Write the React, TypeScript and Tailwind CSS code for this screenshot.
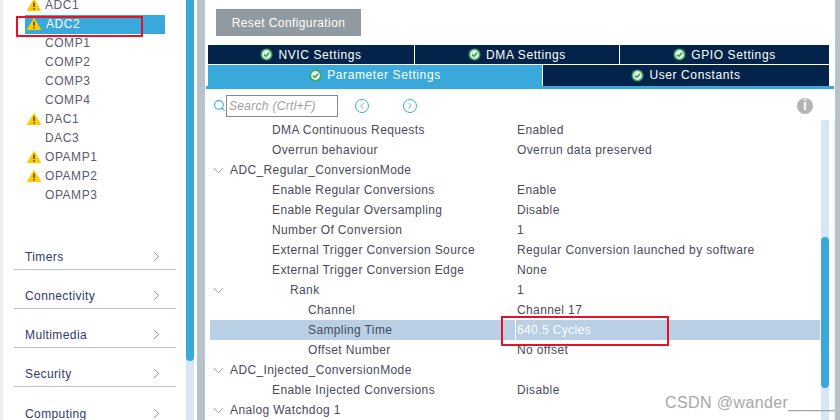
import React from 'react';
import { ChevronRight, ChevronDown, ChevronLeft, Search } from 'lucide-react';

const Warn = () => (
  <svg width="14" height="12" viewBox="0 0 14 12" className="shrink-0">
    <path d="M7 0.5 L13.6 11.5 L0.4 11.5 Z" fill="#ffcc00" stroke="#ffcc00" strokeLinejoin="round" />
    <rect x="6.2" y="3.5" width="1.6" height="4.5" fill="#5b4a00" />
    <rect x="6.2" y="9" width="1.6" height="1.6" fill="#5b4a00" />
  </svg>
);

const Check = () => (
  <svg width="13" height="13" viewBox="0 0 13 13" className="shrink-0">
    <circle cx="6.5" cy="6.5" r="6" fill="#3ba55d" />
    <circle cx="6.5" cy="6.5" r="4.4" fill="#e8f5ec" />
    <path d="M4 6.6 L5.9 8.4 L9 4.9" fill="none" stroke="#3ba55d" strokeWidth="1.6" />
  </svg>
);

const peripherals = [
  { name: 'ADC1', warn: true },
  { name: 'ADC2', warn: true, active: true },
  { name: 'COMP1' },
  { name: 'COMP2' },
  { name: 'COMP3' },
  { name: 'COMP4' },
  { name: 'DAC1', warn: true },
  { name: 'DAC3' },
  { name: 'OPAMP1', warn: true },
  { name: 'OPAMP2', warn: true },
  { name: 'OPAMP3' },
];

const categories = ['Timers', 'Connectivity', 'Multimedia', 'Security', 'Computing'];

const rows = [
  { label: 'DMA Continuous Requests', value: 'Enabled', indent: 'pl-[62px]' },
  { label: 'Overrun behaviour', value: 'Overrun data preserved', indent: 'pl-[62px]' },
  { label: 'ADC_Regular_ConversionMode', value: '', indent: 'pl-[20px]', open: true },
  { label: 'Enable Regular Conversions', value: 'Enable', indent: 'pl-[62px]' },
  { label: 'Enable Regular Oversampling', value: 'Disable', indent: 'pl-[62px]' },
  { label: 'Number Of Conversion', value: '1', indent: 'pl-[62px]' },
  { label: 'External Trigger Conversion Source', value: 'Regular Conversion launched by software', indent: 'pl-[62px]' },
  { label: 'External Trigger Conversion Edge', value: 'None', indent: 'pl-[62px]' },
  { label: 'Rank', value: '1', indent: 'pl-[80px]', open: true },
  { label: 'Channel', value: 'Channel 17', indent: 'pl-[98px]' },
  { label: 'Sampling Time', value: '640.5 Cycles', indent: 'pl-[98px]', selected: true },
  { label: 'Offset Number', value: 'No offset', indent: 'pl-[98px]' },
  { label: 'ADC_Injected_ConversionMode', value: '', indent: 'pl-[20px]', open: true },
  { label: 'Enable Injected Conversions', value: 'Disable', indent: 'pl-[62px]' },
  { label: 'Analog Watchdog 1', value: '', indent: 'pl-[20px]', open: true },
];

export default function App() {
  return (
    <div className="relative flex h-[420px] w-[840px] overflow-hidden bg-white font-['Liberation_Sans',sans-serif] text-[12px]">
      {/* left column */}
      <div className="w-[186px] shrink-0 border-l-[3px] border-[#f0f0f0]">
        <div className="-mt-[4px] ml-[22px] flex flex-col">
          {peripherals.map((p) => (
            <div
              key={p.name}
              className={`flex h-[19px] w-[140px] items-center gap-[5px] pb-[1px] pl-[2px] tracking-[0.55px] ${
                p.active ? 'bg-[#39a9dc] text-white' : 'text-[#5a5a70]'
              }`}
            >
              <div className="w-[13px] shrink-0">{p.warn && <Warn />}</div>
              <span className={p.active ? 'ml-[1px]' : ''}>{p.name}</span>
            </div>
          ))}
        </div>
        <div className="mt-[26px] ml-[11px] w-[162px]">
          {categories.map((c) => (
            <div key={c} className="flex h-[39px] items-end justify-between border-b border-[#b8c2ca] pr-[11px] pl-[11px] text-[#2e3a6e] tracking-[0.4px] last:border-b-0">
              <span className="pb-[3px]">{c}</span>
              <ChevronRight size={17} strokeWidth={1} className="mb-[4px] text-[#666]" />
            </div>
          ))}
        </div>
      </div>

      {/* sidebar scrollbar */}
      <div className="h-full w-[8px] shrink-0 bg-[#d8e7f5]">
        <div className="h-[361px] rounded-b-[4px] bg-[#39a9dc]" />
      </div>
      <div className="w-[3px] shrink-0" />
      <div className="w-[8px] shrink-0 bg-[#b8c2ca]" />

      {/* main panel */}
      <div className="flex w-[630px] shrink-0 flex-col">
        <div className="flex h-[45px] items-start pt-[9px] pl-[11px]">
          <button className="h-[27px] w-[145px] bg-[#929aa1] tracking-[0.4px] text-white">Reset Configuration</button>
        </div>
        <div className="ml-[3px] w-[621px]">
          <div className="flex h-[19px] bg-[#04234a] text-white tracking-[0.6px]">
            {['NVIC Settings', 'DMA Settings', 'GPIO Settings'].map((t, i) => (
              <div
                key={t}
                className={`flex items-center justify-center gap-[5px] ${
                  i === 0 ? 'w-[207px] border-r border-white' : i === 1 ? 'w-[205px] border-r border-white' : 'flex-1'
                }`}
              >
                <Check />
                <span>{t}</span>
              </div>
            ))}
          </div>
          <div className="flex h-[22px] border-t border-white text-white tracking-[0.6px]">
            <div className="flex w-[334px] items-center justify-center gap-[5px] bg-[#39a9dc] pb-[1px]">
              <Check />
              <span>Parameter Settings</span>
            </div>
            <div className="flex flex-1 items-center justify-center gap-[5px] border-l border-white bg-[#04234a] pb-[1px]">
              <Check />
              <span>User Constants</span>
            </div>
          </div>
        </div>
        <div className="ml-[1px] h-[3px] w-[628px] bg-[#39a9dc]" />
        {/* search bar */}
        <div className="flex h-[31px] items-center pt-[2px] pl-[8px]">
          <Search size={13} strokeWidth={2} className="text-[#39a9dc]" />
          <div className="flex h-[22px] w-[112px] items-center border border-[#888] pl-[2px] italic text-[#a0a0a0] tracking-[0.3px]">Search (Crtl+F)</div>
          <div className="ml-[17px] flex h-[14px] w-[14px] items-center justify-center rounded-full border-[1.5px] border-[#39a9dc] text-[#39a9dc]">
            <ChevronLeft size={10} strokeWidth={2} />
          </div>
          <div className="ml-[34px] flex h-[14px] w-[14px] items-center justify-center rounded-full border-[1.5px] border-[#39a9dc] text-[#39a9dc]">
            <ChevronRight size={10} strokeWidth={2} />
          </div>
          <div className="ml-[380px] flex h-[16px] w-[16px] items-center justify-center rounded-full bg-[#b4b4b4] text-[14px] font-bold text-white">i</div>
        </div>
        {/* property tree */}
        <div className="flex min-h-0 flex-1 border-r-2 border-[#f4f4f4]">
          <div className="ml-[5px] w-[611px] tracking-[0.38px] text-[#4a4a5a]">
            {rows.map((r) => (
              <div key={r.label} className={`relative flex h-[20px] w-[610px] items-center ${r.selected ? 'bg-[#b8cfe6]' : ''}`}>
                {r.open && <ChevronDown size={17} strokeWidth={1} className="absolute left-[0px] text-[#777]" />}
                <div className={`w-[305px] shrink-0 whitespace-nowrap ${r.indent}`}>{r.label}</div>
                <div className={`h-full border-l pl-[1px] leading-[20px] ${r.selected ? 'border-white text-white' : 'border-transparent'}`}>{r.value}</div>
              </div>
            ))}
          </div>
          <div className="h-full w-[8px] bg-[#d8e7f5] pt-[117px]">
            <div className="h-[151px] rounded-[4px] bg-[#39a9dc]" />
          </div>
        </div>
      </div>
      <div className="w-[5px] shrink-0 bg-[#b8c2ca]" />

      {/* red annotations */}
      <div className="absolute top-[16px] left-[16px] h-[21px] w-[127px] border-2 border-[#e81123]" />
      <div className="absolute top-[316px] left-[501px] h-[30px] w-[168px] border-2 border-[#e81123]" />
      <div className="absolute top-[391px] left-[665px] text-[16px] tracking-[0.4px] text-[#a8a8a8]">CSDN @wander_____</div>
    </div>
  );
}
